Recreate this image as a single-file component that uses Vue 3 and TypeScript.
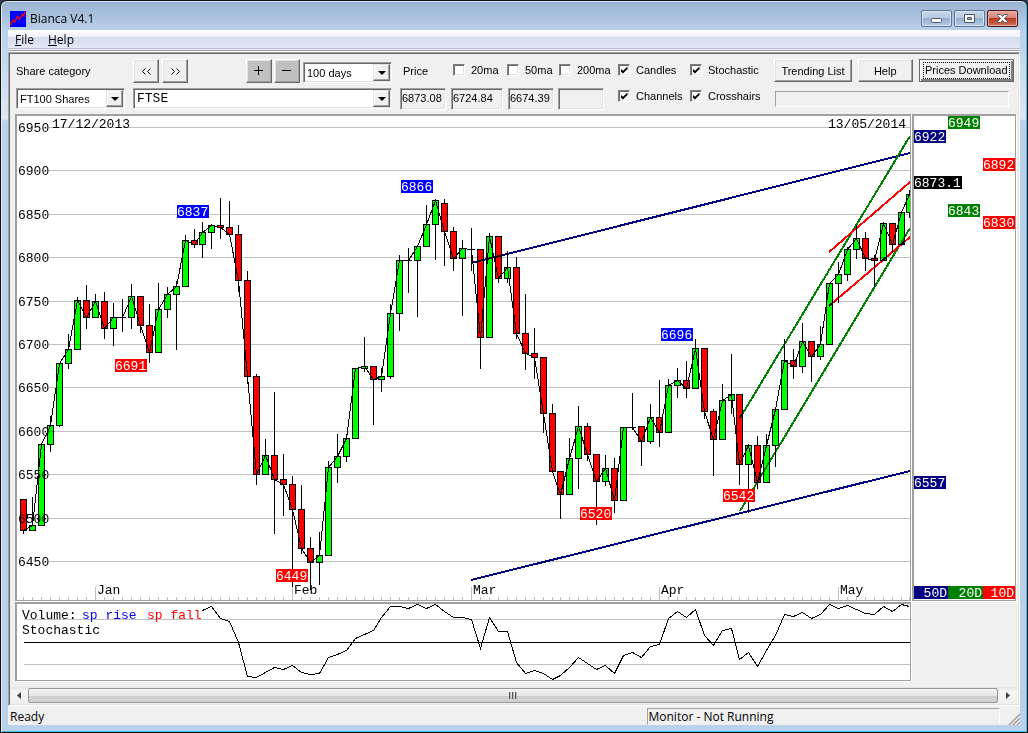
<script setup lang="ts">
import { ref } from 'vue'

type Dir = 'up' | 'down'
interface Candle { high: number; top: number; bottom: number; low: number; dir: Dir }
interface Tag { x: number; y: number; text: string; tone: string; w?: number }

const up = (high: number, top: number, bottom: number, low: number): Candle => ({ high, top, bottom, low, dir: 'up' })
const down = (high: number, top: number, bottom: number, low: number): Candle => ({ high, top, bottom, low, dir: 'down' })

const candles: Candle[] = [
  down(499, 499, 530, 533), up(497, 525, 530, 530), up(444, 444, 525, 525), up(416, 425, 444, 451),
  up(363, 363, 425, 426), up(334, 349, 363, 368), up(297, 300, 349, 349), down(285, 300, 317, 328),
  up(294, 301, 317, 317), down(292, 301, 328, 338), up(303, 317, 328, 345), up(299, 317, 317, 331),
  up(284, 296, 317, 328), down(296, 296, 325, 332), down(304, 325, 352, 362), up(283, 309, 352, 352),
  up(287, 294, 309, 317), up(281, 286, 294, 349), up(235, 240, 286, 286), down(229, 240, 244, 247),
  up(222, 232, 244, 257), up(224, 225, 232, 248), down(198, 225, 227, 238), down(201, 227, 234, 234),
  down(225, 234, 280, 291), down(271, 280, 376, 383), down(374, 376, 474, 484), up(439, 455, 474, 474),
  down(392, 455, 479, 533), down(454, 479, 484, 515), down(476, 484, 509, 586), down(485, 509, 548, 553),
  down(537, 548, 562, 589), up(532, 555, 562, 584), up(461, 467, 555, 555), up(434, 456, 467, 482),
  up(435, 438, 456, 461), up(368, 368, 438, 438), up(337, 366, 368, 371), down(366, 366, 379, 424),
  up(368, 376, 379, 391), up(304, 313, 376, 378), up(255, 260, 313, 330), up(248, 260, 260, 292),
  up(246, 246, 260, 316), up(205, 224, 246, 246), up(200, 200, 224, 259), down(199, 203, 231, 265),
  down(227, 231, 258, 270), up(240, 248, 258, 315), down(228, 249, 249, 270), down(249, 249, 337, 368),
  up(233, 236, 337, 337), down(236, 236, 278, 282), up(251, 267, 278, 282), down(257, 267, 333, 338),
  down(294, 333, 353, 369), down(328, 353, 357, 378), down(357, 357, 413, 432), down(404, 413, 471, 471),
  down(471, 471, 494, 518), up(438, 458, 494, 494), up(406, 426, 458, 488), down(423, 426, 454, 460),
  down(454, 454, 481, 524), up(455, 468, 481, 485), down(458, 468, 500, 512), up(427, 427, 500, 500),
  up(393, 427, 427, 429), down(426, 426, 441, 465), up(404, 417, 441, 443), down(380, 417, 432, 446),
  up(379, 385, 432, 432), up(368, 380, 385, 397), down(361, 380, 388, 397), up(339, 348, 388, 388),
  down(348, 348, 411, 418), down(409, 411, 439, 475), up(384, 400, 439, 439), up(354, 394, 400, 413),
  down(394, 394, 464, 484), up(445, 445, 464, 512), down(436, 445, 482, 488), up(434, 445, 482, 482),
  up(407, 409, 445, 466), up(339, 360, 409, 409), down(349, 360, 366, 378), up(323, 341, 366, 372),
  down(341, 341, 356, 381), up(326, 344, 356, 359), up(283, 283, 344, 344), up(262, 274, 283, 302),
  up(247, 249, 274, 280), up(225, 238, 249, 258), down(232, 238, 258, 270), down(255, 258, 260, 286),
  up(222, 223, 260, 260), down(223, 223, 244, 252), up(212, 212, 244, 244), up(190, 194, 212, 217),
]

const slotX = (i: number): number => Math.min(909, 23 + 9 * i - Math.floor(i / 20))

const closeLine = candles
  .map((c, i) => `${slotX(i) + 0.5},${(c.dir === 'up' ? c.top : c.bottom) + 0.5}`)
  .join(' ')

const stochastic: number[] = [
  610, 606, 618, 621, 642, 676, 677, 672, 667, 669, 665, 672, 674, 673, 657, 654, 650, 638, 634, 630,
  617, 606, 606, 608, 604, 608, 604, 611, 617, 617, 619, 648, 617, 631, 631, 662, 673, 670, 673, 679,
  675, 667, 657, 663, 669, 665, 673, 655, 652, 657, 646, 644, 618, 611, 617, 609, 635, 645, 630, 628,
  659, 652, 666, 650, 635, 614, 616, 612, 618, 614, 604, 608, 605, 609, 613, 614, 606, 611, 604, 606,
]
const stochasticLine = stochastic.map((y, i) => `${slotX(i + 20) + 0.5},${y + 0.5}`).join(' ')

const levels = [
  { y: 127, text: '6950' }, { y: 170, text: '6900' }, { y: 214, text: '6850' }, { y: 257, text: '6800' },
  { y: 301, text: '6750' }, { y: 344, text: '6700' }, { y: 387, text: '6650' }, { y: 431, text: '6600' },
  { y: 474, text: '6550' }, { y: 518, text: '6500' }, { y: 561, text: '6450' },
]
const months = [
  { slot: 8, text: 'Jan' }, { slot: 30, text: 'Feb' }, { slot: 50, text: 'Mar' },
  { slot: 71, text: 'Apr' }, { slot: 91, text: 'May' },
]
const chartTags: Tag[] = [
  { x: 177, y: 205, text: '6837', tone: 'blue' }, { x: 115, y: 359, text: '6691', tone: 'red' },
  { x: 401, y: 180, text: '6866', tone: 'blue' }, { x: 276, y: 569, text: '6449', tone: 'red' },
  { x: 580, y: 507, text: '6520', tone: 'red' }, { x: 661, y: 328, text: '6696', tone: 'blue' },
  { x: 723, y: 489, text: '6542', tone: 'red' },
]
const sideTags: Tag[] = [
  { x: 948, y: 116, text: '6949', tone: 'green' }, { x: 914, y: 130, text: '6922', tone: 'navy' },
  { x: 983, y: 158, text: '6892', tone: 'red' }, { x: 914, y: 176, text: '6873.1', tone: 'black', w: 48 },
  { x: 948, y: 204, text: '6843', tone: 'green' }, { x: 983, y: 216, text: '6830', tone: 'red' },
  { x: 914, y: 476, text: '6557', tone: 'navy' },
]
const legend = [
  { x: 914, w: 34, text: '50D', tone: 'navy' }, { x: 948, w: 35, text: '20D', tone: 'green' },
  { x: 983, w: 32, text: '10D', tone: 'red' },
]

const category = ref('FT100 Shares')
const share = ref('FTSE')
const period = ref('100 days')
const averages = ref([
  { id: 'ma20', text: '20ma', on: false }, { id: 'ma50', text: '50ma', on: false }, { id: 'ma200', text: '200ma', on: false },
])
const overlays = ref([
  { id: 'candles', text: 'Candles', on: true }, { id: 'stochastic', text: 'Stochastic', on: true },
  { id: 'channels', text: 'Channels', on: true }, { id: 'crosshairs', text: 'Crosshairs', on: true },
])
</script>

<template>
  <div class="desktop">
    <div class="window">
      <header class="titlebar">
        <svg class="app-icon" width="16" height="16" viewBox="0 0 16 16" aria-hidden="true">
          <rect width="16" height="16" fill="#0000ff" />
          <path d="M1 14.5V11.5L3.5 9.5L4.5 11L7.5 5.5L9.5 8L12.5 3.5L13.5 5L15 1" fill="none" stroke="#ff0000" stroke-width="1.3" />
        </svg>
        <h1>Bianca V4.1</h1>
        <div class="caption-buttons">
          <button type="button" class="cap" aria-label="Minimize">
            <svg width="13" height="13" viewBox="0 0 13 13"><rect x="1.500" y="6.500" width="10" height="4" rx="1" fill="#fff" stroke="#535666" /></svg>
          </button>
          <button type="button" class="cap" aria-label="Maximize">
            <svg width="13" height="13" viewBox="0 0 13 13"><path d="M1.500 2.500h10v8h-10zM4.500 5.500v2h4v-2z" fill="#fff" fill-rule="evenodd" stroke="#535666" /></svg>
          </button>
          <button type="button" class="cap close" aria-label="Close">
            <svg width="13" height="13" viewBox="0 0 13 13"><path d="M1.500 2.500h3l2 2 2-2h3v1l-3 3 3 3v1h-3l-2-2-2 2h-3v-1l3-3-3-3z" fill="#fff" stroke="#535666" /></svg>
          </button>
        </div>
      </header>

      <nav class="menubar">
        <a href="#file"><u>F</u>ile</a>
        <a href="#help"><u>H</u>elp</a>
      </nav>

      <main class="client">
        <section class="toolbar">
          <div class="picker">
            <div class="line first">
              <label class="cat-label" for="category">Share category</label>
              <button type="button" class="btn square" aria-label="Previous share">
                <svg width="11" height="7" viewBox="0 0 11 7"><path d="M4.500 0.500l-3 3 3 3M9.500 0.500l-3 3 3 3" fill="none" stroke="#000" /></svg>
              </button>
              <button type="button" class="btn square" aria-label="Next share">
                <svg width="11" height="7" viewBox="0 0 11 7"><path d="M1.500 0.500l3 3-3 3M6.500 0.500l3 3-3 3" fill="none" stroke="#000" /></svg>
              </button>
              <span class="grow"></span>
              <button type="button" class="btn square dark" aria-label="Zoom in">
                <svg width="10" height="10" viewBox="0 0 10 10" shape-rendering="crispEdges"><path d="M0 4.500h9M4.500 0v9" stroke="#000" /></svg>
              </button>
              <button type="button" class="btn square dark" aria-label="Zoom out">
                <svg width="10" height="10" viewBox="0 0 10 10" shape-rendering="crispEdges"><path d="M0 4.500h9" stroke="#000" /></svg>
              </button>
              <span class="combo days">
                <select v-model="period" aria-label="Period"><option>100 days</option></select>
                <i></i>
              </span>
            </div>
            <div class="line second">
              <span class="combo cat">
                <select id="category" v-model="category"><option>FT100 Shares</option></select>
                <i></i>
              </span>
              <span class="combo share">
                <select v-model="share" aria-label="Share"><option>FTSE</option></select>
                <i></i>
              </span>
            </div>
          </div>

          <div class="values">
            <label class="price" for="price">Price</label>
            <label v-for="a in averages" :key="a.id" class="check" :for="a.id">
              <input :id="a.id" v-model="a.on" type="checkbox" />{{ a.text }}
            </label>
            <input id="price" class="value v1" type="text" readonly value="6873.08" />
            <input class="value v2" type="text" readonly value="6724.84" aria-label="20ma" />
            <input class="value v3" type="text" readonly value="6674.39" aria-label="50ma" />
            <input class="value v4" type="text" readonly value="" aria-label="200ma" />
          </div>

          <div class="overlays">
            <label v-for="o in overlays" :key="o.id" class="check" :for="o.id">
              <input :id="o.id" v-model="o.on" type="checkbox" />{{ o.text }}
            </label>
          </div>

          <div class="actions">
            <div class="line first">
              <button type="button" class="btn trend">Trending List</button>
              <button type="button" class="btn help">Help</button>
              <button type="button" class="btn default"><span>Prices Download</span></button>
            </div>
            <div class="progress" role="progressbar" aria-label="Download progress"></div>
          </div>
        </section>

        <section class="charts">
          <div class="pane main-pane">
            <svg viewBox="17 116 893 484" role="img" aria-label="FTSE price chart">
              <g shape-rendering="crispEdges">
                <g stroke="#c0c0c0">
                  <line v-for="(c, i) in candles" :key="i" :x1="slotX(i) + 0.5" :x2="slotX(i) + 0.5" y1="597" y2="600" />
                  <line v-for="m in months" :key="m.text" :x1="slotX(m.slot) + 0.5" :x2="slotX(m.slot) + 0.5" y1="587" y2="600" />
                </g>
                <g stroke="#000">
                  <g v-for="(c, i) in candles" :key="i">
                    <line :x1="slotX(i) + 0.5" :x2="slotX(i) + 0.5" :y1="c.high" :y2="c.low + 1" />
                    <line v-if="c.top === c.bottom" :x1="slotX(i) - 3" :x2="slotX(i) + 4" :y1="c.top + 0.5" :y2="c.top + 0.5" />
                    <rect v-else :class="c.dir" :x="slotX(i) - 2.5" :y="c.top + 0.5" width="6" :height="c.bottom - c.top" />
                  </g>
                </g>
                <polyline :points="closeLine" fill="none" stroke="#000" />
                <g class="blend" stroke="#c0c0c0">
                  <line v-for="l in levels" :key="l.y" x1="49" x2="910" :y1="l.y + 0.5" :y2="l.y + 0.5" />
                </g>
                <g class="blend" stroke-width="2">
                  <path d="M471 263L910 153M471 580L910 471" stroke="#000080" />
                  <path d="M740 418L910 136M740 511L910 228" stroke="#008000" />
                  <path d="M829 252L910 182M829 306L910 237" stroke="#ff0000" />
                </g>
              </g>
              <text v-for="l in levels" :key="l.text" x="18" :y="l.y + 5">{{ l.text }}</text>
              <text v-for="m in months" :key="m.text" :x="slotX(m.slot) + 2" y="594">{{ m.text }}</text>
              <text x="52" y="128">17/12/2013</text>
              <text x="906" y="128" text-anchor="end">13/05/2014</text>
              <g v-for="t in chartTags" :key="t.text">
                <rect :class="t.tone" :x="t.x" :y="t.y" width="32" height="13" />
                <text class="inverse" :x="t.x" :y="t.y + 11">{{ t.text }}</text>
              </g>
            </svg>
          </div>

          <div class="pane side-pane">
            <svg viewBox="914 116 101 484" role="img" aria-label="Channel levels">
              <g v-for="t in sideTags" :key="t.text">
                <rect :class="t.tone" :x="t.x" :y="t.y" :width="t.w ?? 32" height="13" />
                <text class="inverse" :x="t.x" :y="t.y + 11">{{ t.text }}</text>
              </g>
              <g v-for="k in legend" :key="k.text">
                <rect :class="k.tone" :x="k.x" y="586" :width="k.w" height="13" />
                <text class="inverse" :x="k.x + k.w - 1" y="597" text-anchor="end">{{ k.text }}</text>
              </g>
            </svg>
          </div>

          <div class="pane stoch-pane">
            <svg viewBox="17 604 893 76" role="img" aria-label="Stochastic chart">
              <g shape-rendering="crispEdges" fill="none">
                <path d="M24 619.500H910M24 664.500H910" stroke="#c0c0c0" />
                <path d="M24 642.500H910" stroke="#000" />
                <polyline :points="stochasticLine" stroke="#000" />
              </g>
              <text x="22" y="619">Volume:</text>
              <text class="rise" x="82" y="619">sp rise</text>
              <text class="fall" x="147" y="619">sp fall</text>
              <text x="22" y="634">Stochastic</text>
            </svg>
          </div>
        </section>

        <div class="scrollbar">
          <button type="button" aria-label="Scroll left"><svg width="4" height="7" viewBox="0 0 4 7"><path d="M4 0v7L0 3.500z" fill="#404040" /></svg></button>
          <div class="thumb"><i></i><i></i><i></i></div>
          <button type="button" class="right" aria-label="Scroll right"><svg width="4" height="7" viewBox="0 0 4 7"><path d="M0 0v7L4 3.500z" fill="#404040" /></svg></button>
        </div>
      </main>

      <footer class="status">
        <span class="ready">Ready</span>
        <span class="monitor">Monitor - Not Running</span>
        <svg class="grip" width="12" height="12" viewBox="0 0 12 12" aria-hidden="true">
          <path d="M1 12L12 1M5 12L12 5M9 12L12 9" stroke="#a0a0a0" stroke-width="1.500" />
        </svg>
      </footer>
    </div>
  </div>
</template>

<style>
body {
  margin: 0;
  background: #000;
}
</style>

<style scoped>
* {
  box-sizing: border-box;
}
.desktop {
  background: linear-gradient(#2e3d55, #10161f 30px, #000 60px);
  font: 11px/14px "Liberation Sans", Arial, sans-serif;
  color: #000;
}
.window {
  display: flex;
  flex-direction: column;
  min-height: 100vh;
  padding: 0 7px 7px;
  border: 1px solid #111;
  border-radius: 7px 7px 0 0;
  background: linear-gradient(#98b2d1, #b9d1ea 30px, #dce8f5 118px, #b9d1ea 120px);
  box-shadow: inset 1px 0 0 #e4eef8, inset -1px -1px 0 #35c5e8, inset 0 1px 0 #d3e1f0;
}
.titlebar {
  display: flex;
  align-items: center;
  height: 29px;
  padding: 6px 2px 0;
}
.app-icon {
  margin-right: 4px;
}
h1 {
  flex: 1;
  margin: 0;
  font: 12px/16px "Segoe UI", "Open Sans", sans-serif;
}
.caption-buttons {
  display: flex;
  gap: 2px;
}
.cap {
  display: flex;
  align-items: center;
  justify-content: center;
  width: 31px;
  height: 17px;
  padding: 0;
  border: 1px solid #5e7490;
  border-radius: 2px;
  background: linear-gradient(#c3d6eb, #b4cae2 50%, #94b0cf 50%, #b3cde8);
  box-shadow: inset 0 0 0 1px #d7e5f4;
}
.cap.close {
  border-color: #4b1018;
  background: linear-gradient(#e5a59a, #d68474 50%, #b8391f 50%, #d17154);
  box-shadow: inset 0 0 0 1px #e8b3a8;
}
.menubar {
  display: flex;
  gap: 14px;
  height: 22px;
  padding: 0 7px 3px;
  border-bottom: 1px solid #fff;
  background: linear-gradient(#fff, #edf0f8 7px, #d5dbee 7px, #e2e8f6 18px, #b6bccc 18px, #b6bccc 19px, #f0f0f0 19px, #f0f0f0 20px, #a0a0a0 20px);
  font: 12px/19px "Segoe UI", "Open Sans", sans-serif;
}
.menubar a {
  color: #000;
  text-decoration: none;
}
.client {
  flex: 1;
  display: flex;
  flex-direction: column;
  border: 1px solid;
  border-color: #a0a0a0 #fff #fff #a0a0a0;
  background: #f0f0f0;
  box-shadow: inset 1px 1px 0 #696969, inset -1px -1px 0 #e3e3e3;
  padding: 1px;
}
.toolbar {
  display: flex;
  height: 60px;
  padding: 5px 4px 4px 6px;
}
.line {
  display: flex;
}
.first {
  height: 24px;
  margin-bottom: 5px;
}
.grow {
  flex: 1;
}
.picker {
  width: 376px;
  margin-right: 8px;
}
.picker .first {
  gap: 2px;
}
.cat-label {
  width: 115px;
  line-height: 24px;
}
.second {
  gap: 8px;
}
.btn {
  min-width: 0;
  padding: 0;
  border: 1px solid;
  border-color: #fff #696969 #696969 #fff;
  background: #f0f0f0;
  box-shadow: inset -1px -1px 0 #a0a0a0, inset 1px 1px 0 #e3e3e3;
  color: #000;
  font: inherit;
}
.square {
  display: flex;
  align-items: center;
  justify-content: center;
  width: 26px;
  height: 24px;
}
.square + .square {
  margin-left: 1px;
}
.dark + .dark {
  margin-left: 0;
}
.dark {
  background: #c0c0c0;
}
.combo {
  position: relative;
  display: flex;
  height: 21px;
  border: 1px solid;
  border-color: #a0a0a0 #fff #fff #a0a0a0;
  background: #fff;
  box-shadow: inset 1px 1px 0 #696969, inset -1px -1px 0 #e3e3e3;
}
.combo select {
  width: 100%;
  padding: 0 18px 0 3px;
  border: 0;
  background: transparent;
  color: #000;
  font: inherit;
  appearance: none;
}
.combo i {
  position: absolute;
  top: 1px;
  right: 1px;
  bottom: 1px;
  width: 17px;
  border: 1px solid;
  border-color: #e3e3e3 #696969 #696969 #e3e3e3;
  background: #f0f0f0;
  box-shadow: inset -1px -1px 0 #a0a0a0, inset 1px 1px 0 #fff;
  pointer-events: none;
}
.combo i::after {
  content: "";
  position: absolute;
  top: 6px;
  left: 4px;
  border: 4px solid transparent;
  border-top-color: #000;
  border-bottom: 0;
}
.days {
  width: 89px;
  margin: 3px 0 0 1px;
}
.cat {
  width: 109px;
}
.share {
  flex: 1;
}
.share select {
  font: 13px "Liberation Mono", monospace;
}
.values {
  display: grid;
  grid-template-columns: 51px 57px 50px 46px;
  grid-template-rows: 22px 22px;
  row-gap: 7px;
  margin-right: 14px;
}
.price {
  padding-left: 3px;
  line-height: 24px;
}
.check {
  display: flex;
  align-items: center;
  gap: 6px;
  white-space: nowrap;
}
.values .check {
  padding-left: 2px;
}
.values .check:nth-of-type(3) {
  padding-left: 0;
}
.values .check:nth-of-type(n + 3) {
  margin-left: -1px;
}
.check input {
  display: grid;
  place-items: center;
  flex: none;
  width: 12px;
  height: 12px;
  margin: 0;
  border: 1px solid;
  border-color: #808080 #fff #fff #808080;
  background: #fff;
  box-shadow: inset 1px 1px 0 #696969, inset -1px -1px 0 #e3e3e3;
  appearance: none;
}
.check input:checked::after {
  content: "";
  width: 7px;
  height: 7px;
  background: #000;
  clip-path: polygon(0 30%, 36% 62%, 100% 0, 100% 36%, 36% 100%, 0 68%);
}
.value {
  min-width: 0;
  height: 22px;
  padding: 0 1px 2px;
  border: 1px solid;
  border-color: #a0a0a0 #fff #fff #a0a0a0;
  border-radius: 0;
  background: #f0f0f0;
  box-shadow: inset 1px 1px 0 #696969, inset -1px -1px 0 #e3e3e3;
  color: #000;
  font: inherit;
}
.v1,
.v3,
.v4 {
  width: 46px;
}
.v2 {
  width: 52px;
}
.overlays {
  display: grid;
  grid-template-columns: 72px 72px;
  grid-template-rows: 22px 22px;
  row-gap: 4px;
  margin-right: 12px;
}
.actions {
  flex: 1;
}
.actions .first {
  gap: 6px;
}
.actions .btn {
  height: 23px;
}
.trend {
  flex: 78;
}
.help {
  flex: 54;
}
.default {
  flex: 96;
  border: 1px solid #696969;
  box-shadow: inset 1px 1px 0 #fff, inset -2px -2px 0 #808080;
}
.default span {
  display: block;
  height: 17px;
  margin: 0 3px;
  border: 1px dotted #000;
  line-height: 15px;
}
.progress {
  height: 16px;
  margin: 8px 5px 0 1px;
  border: 1px solid;
  border-color: #a0a0a0 #fff #fff #a0a0a0;
}
.charts {
  display: grid;
  grid-template-columns: minmax(0, 896fr) minmax(0, 104fr);
  gap: 1px;
  margin: 0 2px 0 5px;
}
.pane {
  border: solid #a0a0a0;
  border-width: 2px 1px 1px 2px;
  background: #fff;
  box-shadow: 1px 1px 0 #fff;
}
.pane svg {
  display: block;
  width: 100%;
  height: auto;
}
.pane text {
  font: 13px "Liberation Mono", monospace;
}
.blend {
  mix-blend-mode: multiply;
}
.up {
  fill: #00ff00;
}
.down,
.red {
  fill: #ff0000;
}
.blue {
  fill: #0000ff;
}
.navy {
  fill: #000080;
}
.green {
  fill: #008000;
}
.black {
  fill: #000;
}
.pane .inverse {
  fill: #fff;
}
.rise {
  fill: #0000ff;
}
.fall {
  fill: #ff0000;
}
.scrollbar {
  display: flex;
  height: 17px;
  margin-top: auto;
  padding: 1px 0;
  background: linear-gradient(#e3e3e3, #f4f4f4 4px, #efefef);
}
.scrollbar button {
  display: flex;
  align-items: center;
  justify-content: center;
  width: 18px;
  padding: 0;
  border: 0;
  background: none;
}
.scrollbar .right {
  width: 20px;
}
.thumb {
  flex: 1;
  display: flex;
  align-items: center;
  justify-content: center;
  gap: 1px;
  border: 1px solid #979797;
  border-radius: 2px;
  background: linear-gradient(#f4f4f4, #e6e6e6 50%, #cdcdd0 50%, #d3d3d5);
}
.thumb i {
  width: 2px;
  height: 7px;
  border-left: 1px solid #555;
  background: #bbb;
}
.status {
  display: flex;
  height: 19px;
  padding: 2px 0 0 2px;
  background: #f0f0f0;
  font: 12px/17px "Segoe UI", "Open Sans", sans-serif;
}
.ready {
  flex: 1;
}
.monitor {
  width: 35%;
  padding-left: 1px;
  border: 1px solid;
  border-color: #a0a0a0 #fff transparent #a0a0a0;
  line-height: 15px;
}
.grip {
  margin: 5px 0 0 8px;
}
</style>
